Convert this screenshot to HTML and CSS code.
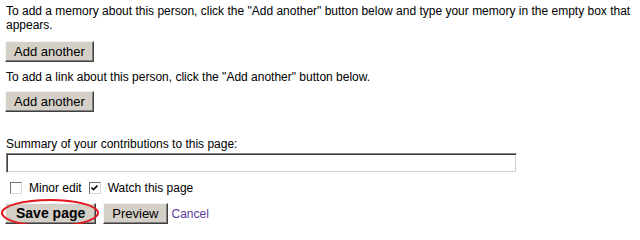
FILE: index.html
```html
<!DOCTYPE html>
<html>
<head>
<meta charset="utf-8">
<link rel="stylesheet" href="styles.css">
</head>
<body>
<div class="page">
  <p class="note">To add a memory about this person, click the "Add another" button below and type your memory in the empty box that appears.</p>
  <div class="row first"><button class="btn">Add another</button></div>
  <p class="note gap">To add a link about this person, click the "Add another" button below.</p>
  <div class="row second"><button class="btn">Add another</button></div>
  <label class="summary-label" for="summary">Summary of your contributions to this page:</label>
  <input class="summary" id="summary" type="text">
  <div class="checks">
    <span class="check"><span class="box"></span><span class="check-text">Minor edit</span></span>
    <span class="check"><span class="box"><svg width="9" height="9" viewBox="0 0 9 9"><polyline points="1.5,3.5 3.5,5.5 7.5,1.5" fill="none" stroke="#000" stroke-width="1.6"/></svg></span><span class="check-text">Watch this page</span></span>
  </div>
  <div class="actions">
    <span class="save-wrap"><button class="btn save">Save page</button><span class="ring"></span></span>
    <button class="btn">Preview</button>
    <a class="cancel" href="#">Cancel</a>
  </div>
</div>
</body>
</html>
```
FILE: styles.css
```css
html, body {
  margin: 0;
  padding: 0;
  background: #fff;
}
body {
  font-family: "Liberation Sans", Arial, sans-serif;
  font-size: 12px;
  color: #000;
}
.page {
  padding: 4px 6px 0 6px;
  display: flex;
  flex-direction: column;
  align-items: flex-start;
}
.note {
  margin: 0;
  line-height: 14px;
}
.note.gap {
  margin-top: 8px;
}
.row.first {
  margin-top: 9px;
}
.row.second {
  margin-top: 7px;
}
.btn {
  font-family: "Liberation Sans", Arial, sans-serif;
  font-size: 13px;
  line-height: 15px;
  color: #000;
  background: #d4d0c8;
  padding: 2px 8px;
  margin: 0 0 0 -1px;
  border: 1px solid;
  border-color: #f4f4f4 #404040 #404040 #f4f4f4;
  box-shadow: inset -1px -1px 0 #808080;
  border-radius: 0;
}
.btn.save {
  font-size: 14px;
  font-weight: bold;
  padding: 2px 10px;
  margin: 0;
}
.summary-label {
  margin-top: 25px;
  line-height: 14px;
}
.summary {
  margin: 2px 0 0 0;
  box-sizing: border-box;
  width: 511px;
  height: 20px;
  padding: 0 2px;
  border: 1px solid;
  border-color: #808080 #ffffff #ffffff #808080;
  box-shadow: inset 1px 1px 0 #404040, inset -1px -1px 0 #d4d0c8;
  background: #fff;
  font-family: "Liberation Sans", Arial, sans-serif;
  font-size: 12px;
}
.checks {
  margin-top: 8px;
  height: 14px;
  display: flex;
  align-items: center;
  padding-left: 4px;
  gap: 7px;
}
.check {
  display: flex;
  align-items: center;
  gap: 7px;
}
.box {
  box-sizing: border-box;
  width: 12px;
  height: 12px;
  border: 1px solid;
  border-color: #707070 #d8d8d8 #d8d8d8 #707070;
  background: #fff;
  display: flex;
  align-items: center;
  justify-content: center;
}
.box svg {
  display: block;
}
.check-text {
  line-height: 14px;
}
.actions {
  margin-top: 8px;
  display: flex;
  align-items: center;
}
.save-wrap {
  position: relative;
  display: inline-block;
  margin-left: -1px;
}
.save-wrap .btn {
  display: block;
}
.ring {
  position: absolute;
  left: -4px;
  top: -4px;
  right: -3px;
  bottom: -3px;
  border: 2px solid #e2161d;
  border-radius: 50%;
  pointer-events: none;
}
.actions .btn:not(.save) {
  margin-left: 7px;
}
.cancel {
  margin-left: 4px;
  color: #5a3d9e;
  text-decoration: none;
  font-size: 12px;
}
```
